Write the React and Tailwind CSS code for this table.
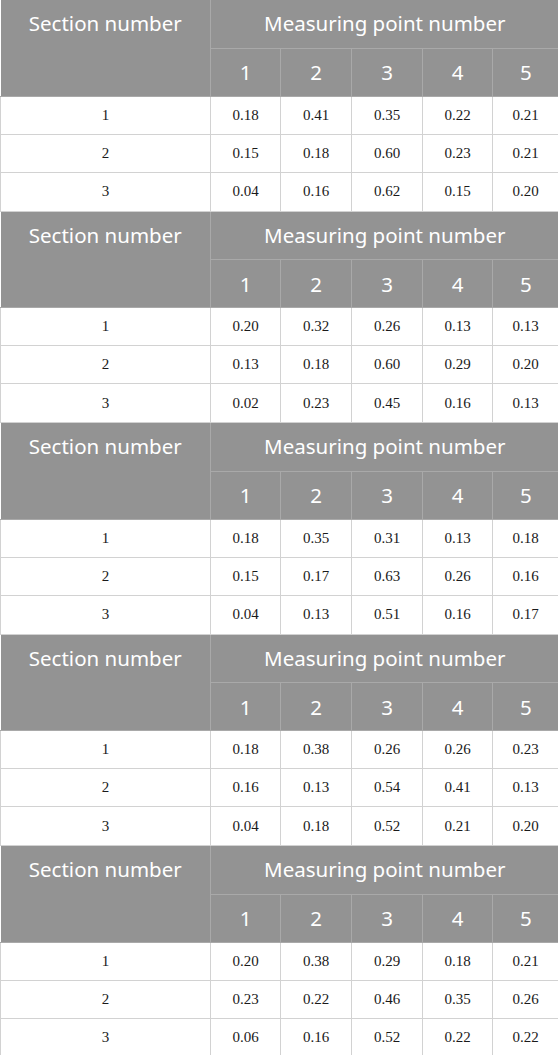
const tables = [
  [
    ["0.18", "0.41", "0.35", "0.22", "0.21"],
    ["0.15", "0.18", "0.60", "0.23", "0.21"],
    ["0.04", "0.16", "0.62", "0.15", "0.20"],
  ],
  [
    ["0.20", "0.32", "0.26", "0.13", "0.13"],
    ["0.13", "0.18", "0.60", "0.29", "0.20"],
    ["0.02", "0.23", "0.45", "0.16", "0.13"],
  ],
  [
    ["0.18", "0.35", "0.31", "0.13", "0.18"],
    ["0.15", "0.17", "0.63", "0.26", "0.16"],
    ["0.04", "0.13", "0.51", "0.16", "0.17"],
  ],
  [
    ["0.18", "0.38", "0.26", "0.26", "0.23"],
    ["0.16", "0.13", "0.54", "0.41", "0.13"],
    ["0.04", "0.18", "0.52", "0.21", "0.20"],
  ],
  [
    ["0.20", "0.38", "0.29", "0.18", "0.21"],
    ["0.23", "0.22", "0.46", "0.35", "0.26"],
    ["0.06", "0.16", "0.52", "0.22", "0.22"],
  ],
];

const rowHeights = ["h-[38px]", "h-[38px]", "h-[39px]"];

const MeasureTable = ({ rows }) => (
  <table className="w-full table-fixed border-collapse">
    <colgroup>
      <col className="w-[210px]" />
      <col className="w-[70px]" />
      <col className="w-[71px]" />
      <col className="w-[71px]" />
      <col className="w-[70px]" />
      <col className="w-[66px]" />
    </colgroup>
    <thead className="bg-[#939393] text-white font-['Noto_Sans',sans-serif] text-[20.5px] leading-[28px]">
      <tr className="h-[48px]">
        <th
          rowSpan={2}
          className="align-top pt-[9px] font-normal border border-[#a9a9a9] border-t-0 border-l-0"
        >
          Section number
        </th>
        <th
          colSpan={5}
          className="align-top pt-[9px] font-normal border border-[#a9a9a9] border-t-0 border-r-0"
        >
          Measuring point number
        </th>
      </tr>
      <tr className="h-[48px]">
        {[1, 2, 3, 4, 5].map((n) => (
          <th key={n} className="font-normal border border-[#a9a9a9] last:border-r-0">
            {n}
          </th>
        ))}
      </tr>
    </thead>
    <tbody className="bg-white text-[#1a1a1a] font-['Liberation_Serif',serif] text-[15px]">
      {rows.map((row, i) => (
        <tr key={i} className={rowHeights[i]}>
          <td className="text-center border border-[#d2d2d2]">{i + 1}</td>
          {row.map((v, j) => (
            <td key={j} className="text-center border border-[#d2d2d2]">
              {v}
            </td>
          ))}
        </tr>
      ))}
    </tbody>
  </table>
);

export default function App() {
  return (
    <div className="w-[558px] bg-white">
      {tables.map((rows, i) => (
        <MeasureTable key={i} rows={rows} />
      ))}
    </div>
  );
}
